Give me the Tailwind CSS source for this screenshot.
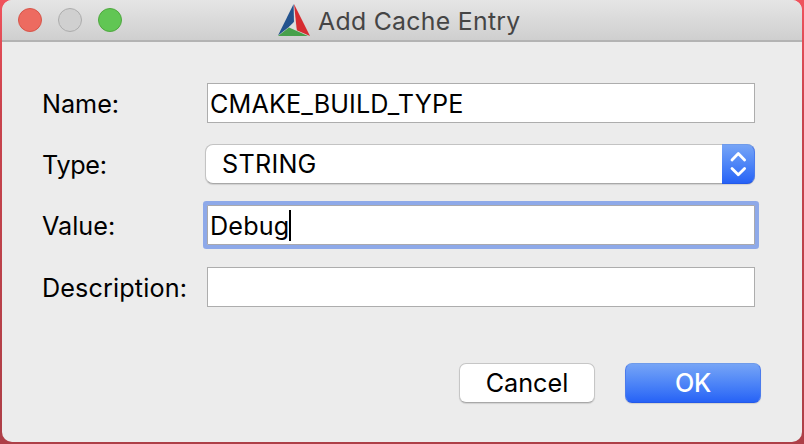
<!DOCTYPE html>
<html lang="en">
<head>
<meta charset="utf-8">
<title>Add Cache Entry</title>
<script src="https://cdn.jsdelivr.net/npm/@tailwindcss/browser@4"></script>
</head>
<body class="w-[804px] h-[444px] overflow-hidden bg-linear-to-b from-[#f0525c] via-[#c9434d] via-25% to-[#ad3f47] px-[2px] pb-[2px] font-['Inter','Liberation_Sans',sans-serif] text-[25.2px] text-black">
<main class="w-[800px] h-[442px] rounded-[10px] overflow-hidden bg-[#ececec] flex flex-col">
  <header class="h-[42px] shrink-0 flex items-center bg-linear-to-b from-[#e5e5e5] to-[#cfcfcf] border-b-2 border-[#b3b3b3] pl-4">
    <div class="flex gap-4">
      <span class="size-6 rounded-full bg-[#ed6b60] border border-[#d65549]"></span>
      <span class="size-6 rounded-full bg-[#d0d0d0] border border-[#acacac]"></span>
      <span class="size-6 rounded-full bg-[#61c654] border border-[#4fa73f]"></span>
    </div>
    <svg class="ml-[155px] w-[34px] h-[34px] shrink-0" viewBox="0 0 34 34" fill="none">
      <path d="M16.6 1 L1 32.5 L17 20Z" fill="#23538e"/>
      <path d="M17 1 L33 33 L19.8 27.3Z" fill="#d62c31"/>
      <path d="M1 33 L12 24.5 L31 33Z" fill="#47a04a"/>
      <path d="M17.3 18.5 L12 24 L19.6 27.3Z" fill="#dedede"/>
    </svg>
    <h1 class="ml-[7px] h-10 leading-[42px] text-[24.8px] text-[#454545] tracking-[0.3px] whitespace-nowrap">Add Cache Entry</h1>
  </header>
  <form class="pt-[41px] pl-10 pr-[39px]">
    <div class="flex h-10 leading-[43px]">
      <label class="w-[165px] whitespace-nowrap tracking-[0px]">Name:</label>
      <div class="w-[548px] h-10 bg-white border border-[#adadad] pl-[2px] leading-[40px] tracking-[0.12px]">CMAKE_BUILD_TYPE</div>
    </div>
    <div class="flex h-10 mt-[21px] leading-[43px]">
      <label class="w-[163px] whitespace-nowrap tracking-[-0.3px]">Type:</label>
      <div class="w-[550px] h-10 bg-white rounded-[8px] border border-[#c3c3c3] border-b-[#a8a8a8] shadow-[0_1px_1px_rgba(0,0,0,0.12)] flex">
        <span class="pl-4 flex-1 leading-[38px] tracking-[0.25px]">STRING</span>
        <span class="-m-px w-[33px] h-10 rounded-r-[8px] bg-linear-to-b from-[#76a4f6] to-[#2762f6] border-t border-r border-b border-t-[#6f9bea] border-r-[#4b7bec] border-b-[#2459e8]">
          <svg class="size-full" viewBox="0 0 32 38" fill="none" stroke="#fff" stroke-width="2.8" stroke-linecap="round" stroke-linejoin="round"><path d="M10 15 L16.3 8.6 L22.6 15M10 23.4 L16.3 29.8 L22.6 23.4"/></svg>
        </span>
      </div>
    </div>
    <div class="flex h-10 mt-[21px] leading-[43px]">
      <label class="w-[165px] whitespace-nowrap tracking-[0px]">Value:</label>
      <div class="w-[548px] h-10 bg-white border border-[#a9a9ad] pl-[2px] leading-[40px] tracking-[0.15px] flex ring-4 ring-[#8ea9e9] rounded-[1px]"><span>Debug</span><span class="w-[2px] h-[31px] mt-1 bg-black"></span></div>
    </div>
    <div class="flex h-10 mt-[22px] leading-[43px]">
      <label class="w-[165px] whitespace-nowrap tracking-[0.13px]">Description:</label>
      <div class="w-[548px] h-10 bg-white border border-[#adadad]"></div>
    </div>
    <div class="flex justify-end gap-[30px] mt-14 mr-[2px] text-center">
      <button type="button" class="w-[136px] h-10 rounded-[7px] bg-white border border-[#c6c6c6] border-b-[#a8a8a8] shadow-[0_1px_1px_rgba(0,0,0,0.12)] leading-[38px]">Cancel</button>
      <button type="button" class="w-[136px] h-10 rounded-[7px] bg-linear-to-b from-[#76a4f6] to-[#2762f6] border border-[#4b7bec] border-t-[#6f9bea] border-b-[#2459e8] shadow-[0_1px_1px_rgba(0,0,0,0.12)] leading-[38px] text-white font-medium tracking-[-0.2px]">OK</button>
    </div>
  </form>
</main>
</body>
</html>
